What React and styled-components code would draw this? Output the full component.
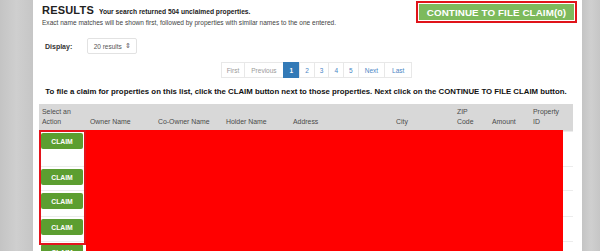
import React from "react";
import styled, { createGlobalStyle } from "styled-components";

const GlobalStyle = createGlobalStyle`
  html, body {
    margin: 0;
    padding: 0;
    background: #c9c9c9;
    font-family: "Liberation Sans", Arial, sans-serif;
    color: #333;
  }
`;

const Page = styled.div`
  display: flex;
  width: 600px;
  height: 251px;
  overflow: hidden;
`;

const Gutter = styled.div`
  width: ${(props) => props.w}px;
  flex-shrink: 0;
  background: linear-gradient(90deg, #c4c4c4, #cfcfcf 50%, #c6c6c6);
`;

const Panel = styled.div`
  width: 549px;
  flex-shrink: 0;
  background: #fff;
  padding: 0 9px 0 6px;
  box-sizing: border-box;
`;

const TopRow = styled.div`
  display: flex;
  justify-content: space-between;
  align-items: flex-start;
  height: 35px;
`;

const Intro = styled.div`
  padding: 4px 0 0 3px;
`;

const TitleLine = styled.div`
  display: flex;
  align-items: baseline;
  gap: 5px;
`;

const Title = styled.span`
  font-size: 11px;
  font-weight: bold;
  color: #222;
  letter-spacing: 0.2px;
`;

const Count = styled.span`
  font-size: 6.7px;
  font-weight: bold;
  color: #222;
`;

const Note = styled.div`
  font-size: 6.55px;
  color: #444;
  margin-top: 3px;
`;

const ContinueFrame = styled.div`
  margin: 1px -4px 0 0;
  border: 2px solid #e0141a;
  padding: 1px;
  background: #fff;
`;

const ContinueButton = styled.div`
  width: 155px;
  height: 16px;
  background: #7dba5c;
  color: #fff;
  font-size: 9.8px;
  font-weight: bold;
  display: flex;
  align-items: center;
  justify-content: center;
  letter-spacing: 0.1px;
`;

const DisplayRow = styled.div`
  display: flex;
  align-items: center;
  gap: 15px;
  padding-left: 6px;
  height: 18px;
  margin-top: 2px;
`;

const Label = styled.span`
  font-size: 7px;
  font-weight: bold;
  color: #333;
`;

const Select = styled.div`
  width: 50px;
  height: 16px;
  box-sizing: border-box;
  border: 1px solid #e2e2e2;
  border-radius: 2px;
  display: flex;
  align-items: center;
  justify-content: center;
  gap: 3px;
  font-size: 6.5px;
  color: #555;
`;

const Pager = styled.div`
  display: flex;
  justify-content: center;
  padding-left: 22px;
  margin-top: 7px;
`;

const PageItem = styled.div`
  height: 16px;
  padding: 0 ${(props) => props.pad}px;
  display: flex;
  align-items: center;
  font-size: 6.5px;
  border: 1px solid #e8e8e8;
  margin-left: -1px;
  box-sizing: border-box;
  background: ${(props) => (props.active ? "#337ab7" : "#fff")};
  color: ${(props) =>
    props.active ? "#fff" : props.muted ? "#9a9a9a" : "#4a86c5"};
  font-weight: ${(props) => (props.active ? "bold" : "normal")};
  border-color: ${(props) => (props.active ? "#337ab7" : "#e8e8e8")};
`;

const Instructions = styled.div`
  text-align: center;
  font-size: 7.8px;
  font-weight: bold;
  color: #111;
  margin-top: 9px;
  white-space: nowrap;
`;

const Table = styled.div`
  margin-top: 8px;
  width: 534px;
`;

const cols = "48px 68px 68px 67px 103px 61px 35px 41px 43px";

const HeadRow = styled.div`
  display: grid;
  grid-template-columns: ${cols};
  height: 27px;
  background: #d8d8d8;
  align-items: end;
  padding-bottom: 4px;
  box-sizing: border-box;
`;

const HeadCell = styled.div`
  font-size: 6.9px;
  line-height: 10px;
  color: #4a4a4a;
  padding-left: 3px;
`;

const Body = styled.div`
  position: relative;
`;

const Row = styled.div`
  display: grid;
  grid-template-columns: ${cols};
  height: ${(props) => props.h}px;
  border-top: 1px solid #ececec;
  box-sizing: border-box;
  padding-top: ${(props) => props.top}px;
`;

const ActionCell = styled.div`
  padding-left: 2px;
`;

const ClaimButton = styled.div`
  width: 42px;
  height: 16px;
  border-radius: 2px;
  background: #5c9e30;
  color: #fff;
  font-size: 6.8px;
  font-weight: bold;
  display: flex;
  align-items: center;
  justify-content: center;
`;

const Redaction = styled.div`
  position: absolute;
  left: 47px;
  top: -1px;
  width: 477px;
  height: 130px;
  background: #ff0000;
`;

const ActionHighlight = styled.div`
  position: absolute;
  left: 0;
  top: -1px;
  width: 47px;
  height: 115px;
  border: 2px solid #e3141c;
  box-sizing: border-box;
`;

const headers = [
  ["Select an", "Action"],
  ["", "Owner Name"],
  ["", "Co-Owner Name"],
  ["", "Holder Name"],
  ["", "Address"],
  ["", "City"],
  ["ZIP", "Code"],
  ["", "Amount"],
  ["Property", "ID"],
];

const rows = [
  { h: 35, top: 1 },
  { h: 24, top: 2 },
  { h: 26, top: 2 },
  { h: 25, top: 2 },
  { h: 25, top: 2 },
];

const pages = [
  { label: "First", pad: 5, muted: true },
  { label: "Previous", pad: 6, muted: true },
  { label: "1", pad: 6, active: true },
  { label: "2", pad: 5 },
  { label: "3", pad: 5 },
  { label: "4", pad: 5 },
  { label: "5", pad: 5 },
  { label: "Next", pad: 6 },
  { label: "Last", pad: 7 },
];

const App = () => {
  return (
    <>
      <GlobalStyle />
      <Page>
        <Gutter w={33} />
        <Panel>
          <TopRow>
            <Intro>
              <TitleLine>
                <Title>RESULTS</Title>
                <Count>Your search returned 504 unclaimed properties.</Count>
              </TitleLine>
              <Note>
                Exact name matches will be shown first, followed by properties
                with similar names to the one entered.
              </Note>
            </Intro>
            <ContinueFrame>
              <ContinueButton>CONTINUE TO FILE CLAIM(0)</ContinueButton>
            </ContinueFrame>
          </TopRow>
          <DisplayRow>
            <Label>Display:</Label>
            <Select>
              20 results <span>&#8661;</span>
            </Select>
          </DisplayRow>
          <Pager>
            {pages.map((p) => (
              <PageItem
                key={p.label}
                pad={p.pad}
                active={p.active}
                muted={p.muted}
              >
                {p.label}
              </PageItem>
            ))}
          </Pager>
          <Instructions>
            To file a claim for properties on this list, click the CLAIM button
            next to those properties. Next click on the CONTINUE TO FILE CLAIM
            button.
          </Instructions>
          <Table>
            <HeadRow>
              {headers.map(([a, b], i) => (
                <HeadCell key={i}>
                  {a && <div>{a}</div>}
                  <div>{b}</div>
                </HeadCell>
              ))}
            </HeadRow>
            <Body>
              {rows.map((r, i) => (
                <Row key={i} h={r.h} top={r.top}>
                  <ActionCell>
                    <ClaimButton>CLAIM</ClaimButton>
                  </ActionCell>
                </Row>
              ))}
              <Redaction />
              <ActionHighlight />
            </Body>
          </Table>
        </Panel>
        <Gutter w={18} />
      </Page>
    </>
  );
};

export default App;
